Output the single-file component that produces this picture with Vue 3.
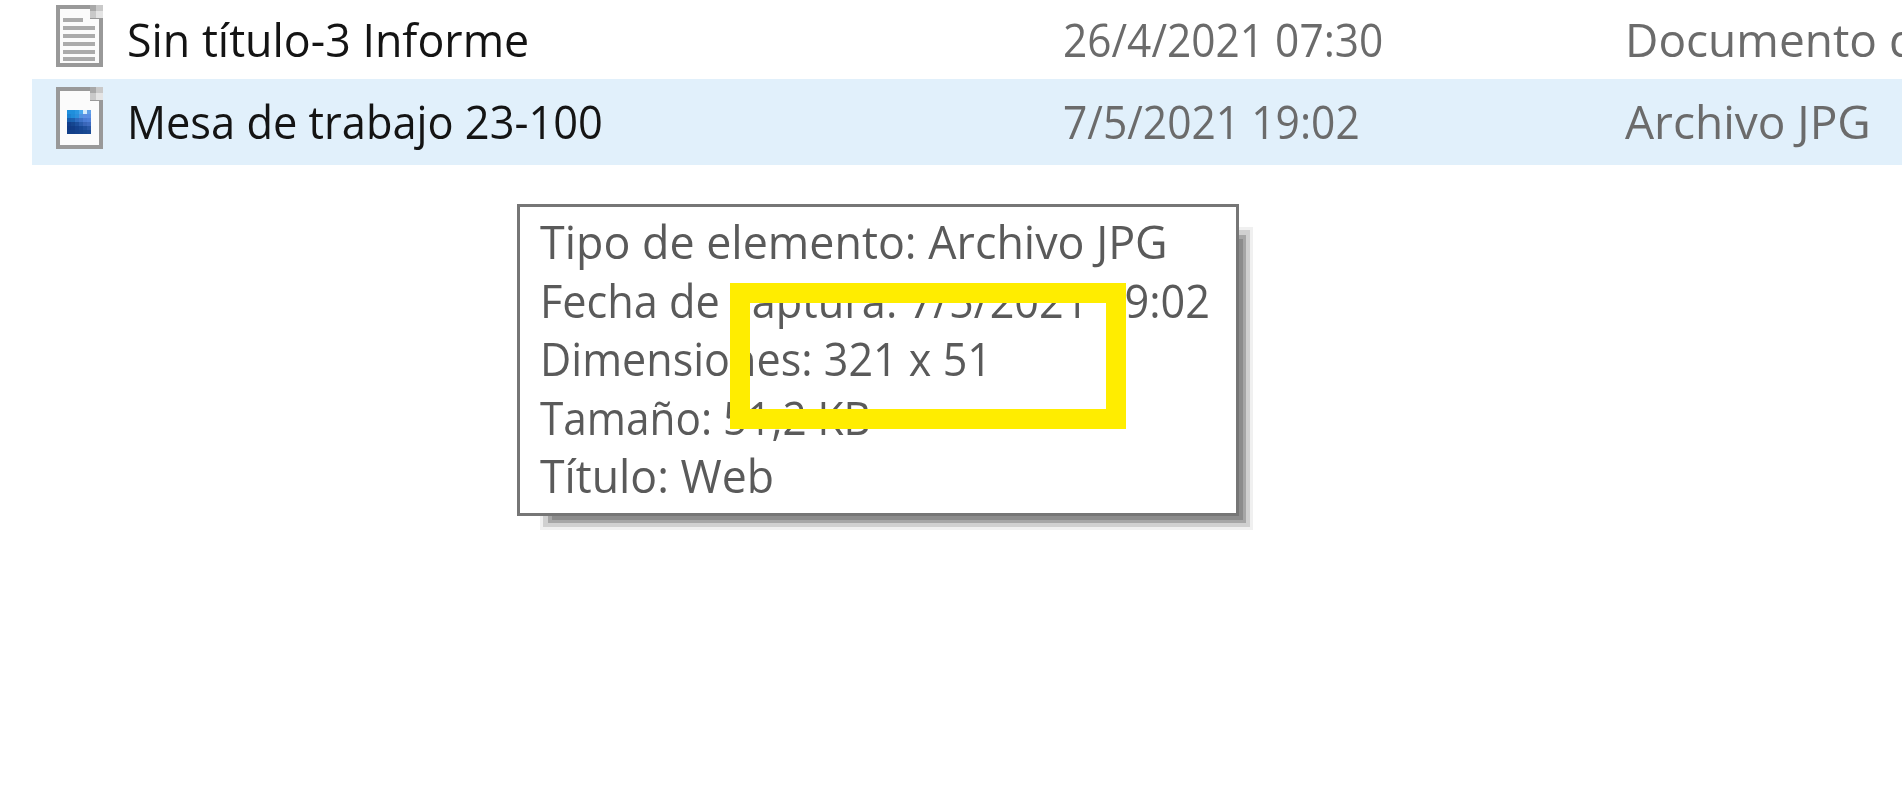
<script setup>
const rows = [
  { name: 'Sin título-3 Informe', nameFit: 0.973, date: '26/4/2021 07:30', dateFit: 0.923, type: 'Documento de texto', typeFit: 1, icon: 'doc', active: false },
  { name: 'Mesa de trabajo 23-100', nameFit: 0.943, date: '7/5/2021 19:02', dateFit: 0.925, type: 'Archivo JPG', typeFit: 1, icon: 'img', active: true }
]
const tipLines = [
  { text: 'Tipo de elemento: Archivo JPG', fit: 0.974 },
  { text: 'Fecha de captura: 7/5/2021 19:02', fit: 0.94 },
  { text: 'Dimensiones: 321 x 51', fit: 0.937 },
  { text: 'Tamaño: 51,2 KB', fit: 0.92 },
  { text: 'Título: Web', fit: 0.97 }
]
const bars = [18, 26, 34, 42, 50, 57]
const mosaic = [
  ['#1f8fdc', '#1f8fdc', '#2a97e2', '#4aa8ee', '#d5ecfb', '#5f9fe8'],
  ['#1c82d2', '#1f8bd8', '#2c8fdc', '#4f93e0', '#5e8fe2', '#5a8fe4'],
  ['#1a5fae', '#1c62b2', '#2f6dc0', '#3d72c8', '#4a7cd4', '#4f80d8'],
  ['#123f8c', '#15468f', '#1c4f9c', '#2a5cac', '#3a66b8', '#3f6cc0'],
  ['#103a84', '#113c86', '#14428e', '#184894', '#1f4f9c', '#2a58a6'],
  ['#123f88', '#123f88', '#13428c', '#15448e', '#174890', '#1a4a94']
]
</script>

<template>
  <main class="page">
    <section class="list">
      <div v-for="row in rows" :key="row.name" class="row" :class="{ active: row.active }">
        <div class="name-cell">
          <svg class="icon" viewBox="0 0 47 62" width="47" height="62">
            <path d="M2 2H36V12H45V60H2Z" fill="#fbfbfb" stroke="#999" stroke-width="4" />
            <rect x="34" y="0" width="13" height="13" fill="#c9c9c9" />
            <rect x="34" y="0" width="6" height="6" fill="#a8a8a8" />
            <rect x="40" y="6" width="7" height="7" fill="#e4e4e4" />
            <template v-if="row.icon === 'doc'">
              <rect v-for="(b, i) in bars" :key="b" x="7" :y="b - 5" :width="i === 0 ? 20 : 32" height="4" fill="#ababab" />
            </template>
            <template v-else>
              <g v-for="(line, y) in mosaic" :key="y">
                <rect v-for="(c, x) in line" :key="x" :x="11 + x * 4" :y="23 + y * 4" width="4" height="4" :fill="c" />
              </g>
            </template>
          </svg>
          <span class="txt list-txt name" :style="{ '--fit': row.nameFit }">{{ row.name }}</span>
        </div>
        <span class="txt list-txt meta" :style="{ '--fit': row.dateFit }">{{ row.date }}</span>
        <span class="txt list-txt meta" :style="{ '--fit': row.typeFit }">{{ row.type }}</span>
      </div>
    </section>

    <aside class="tooltip">
      <div v-for="line in tipLines" :key="line.text" class="tip-line">
        <span class="txt" :style="{ '--fit': line.fit }">{{ line.text }}</span>
      </div>
    </aside>
    <div class="marker"></div>
  </main>
</template>

<style>
html, body { margin: 0; background: #fff; overflow: hidden; }
</style>

<style scoped>
.page {
  position: relative;
  width: 1902px;
  height: 809px;
  overflow: hidden;
  background: #fff;
  font-family: "Open Sans", "Noto Sans", sans-serif;
  font-size: 46px;
}
.list { padding-left: 32px; }
.row {
  display: grid;
  grid-template-columns: 1031px 562px 1fr;
  align-items: center;
  box-sizing: border-box;
  height: 79px;
  padding-bottom: 7px;
  white-space: nowrap;
  overflow: hidden;
}
.row.active { height: 86px; padding-bottom: 8px; background: #e1f0fb; }
.name-cell { display: flex; align-items: center; gap: 24px; padding-left: 24px; }
.icon { flex: none; filter: blur(0.5px); }
.txt {
  display: inline-block;
  transform: scaleX(var(--fit));
  transform-origin: left center;
  filter: blur(0.5px);
}
.list-txt { transform: translateY(3px) scaleX(var(--fit)); }
.name { color: #141414; }
.meta { color: #6b6b6b; }
.tooltip {
  position: absolute;
  left: 517px;
  top: 204px;
  box-sizing: border-box;
  width: 722px;
  height: 312px;
  padding: 5px 20px;
  background: #fff;
  border: 3px solid #767676;
  box-shadow:
    19.5px 19.5px 0 -15.5px #8c8c8c,
    19px 19px 0 -12px #a6a6a6,
    18.5px 18.5px 0 -7.5px #d0d0d0,
    18.5px 18.5px 0 -4.5px #f0f0f0;
  color: #5a5a5a;
  white-space: nowrap;
}
.tip-line { height: 58.5px; line-height: 58.5px; }
.marker {
  position: absolute;
  left: 730px;
  top: 283px;
  box-sizing: border-box;
  width: 396px;
  height: 146px;
  border: 20px solid #ffed00;
}
</style>
